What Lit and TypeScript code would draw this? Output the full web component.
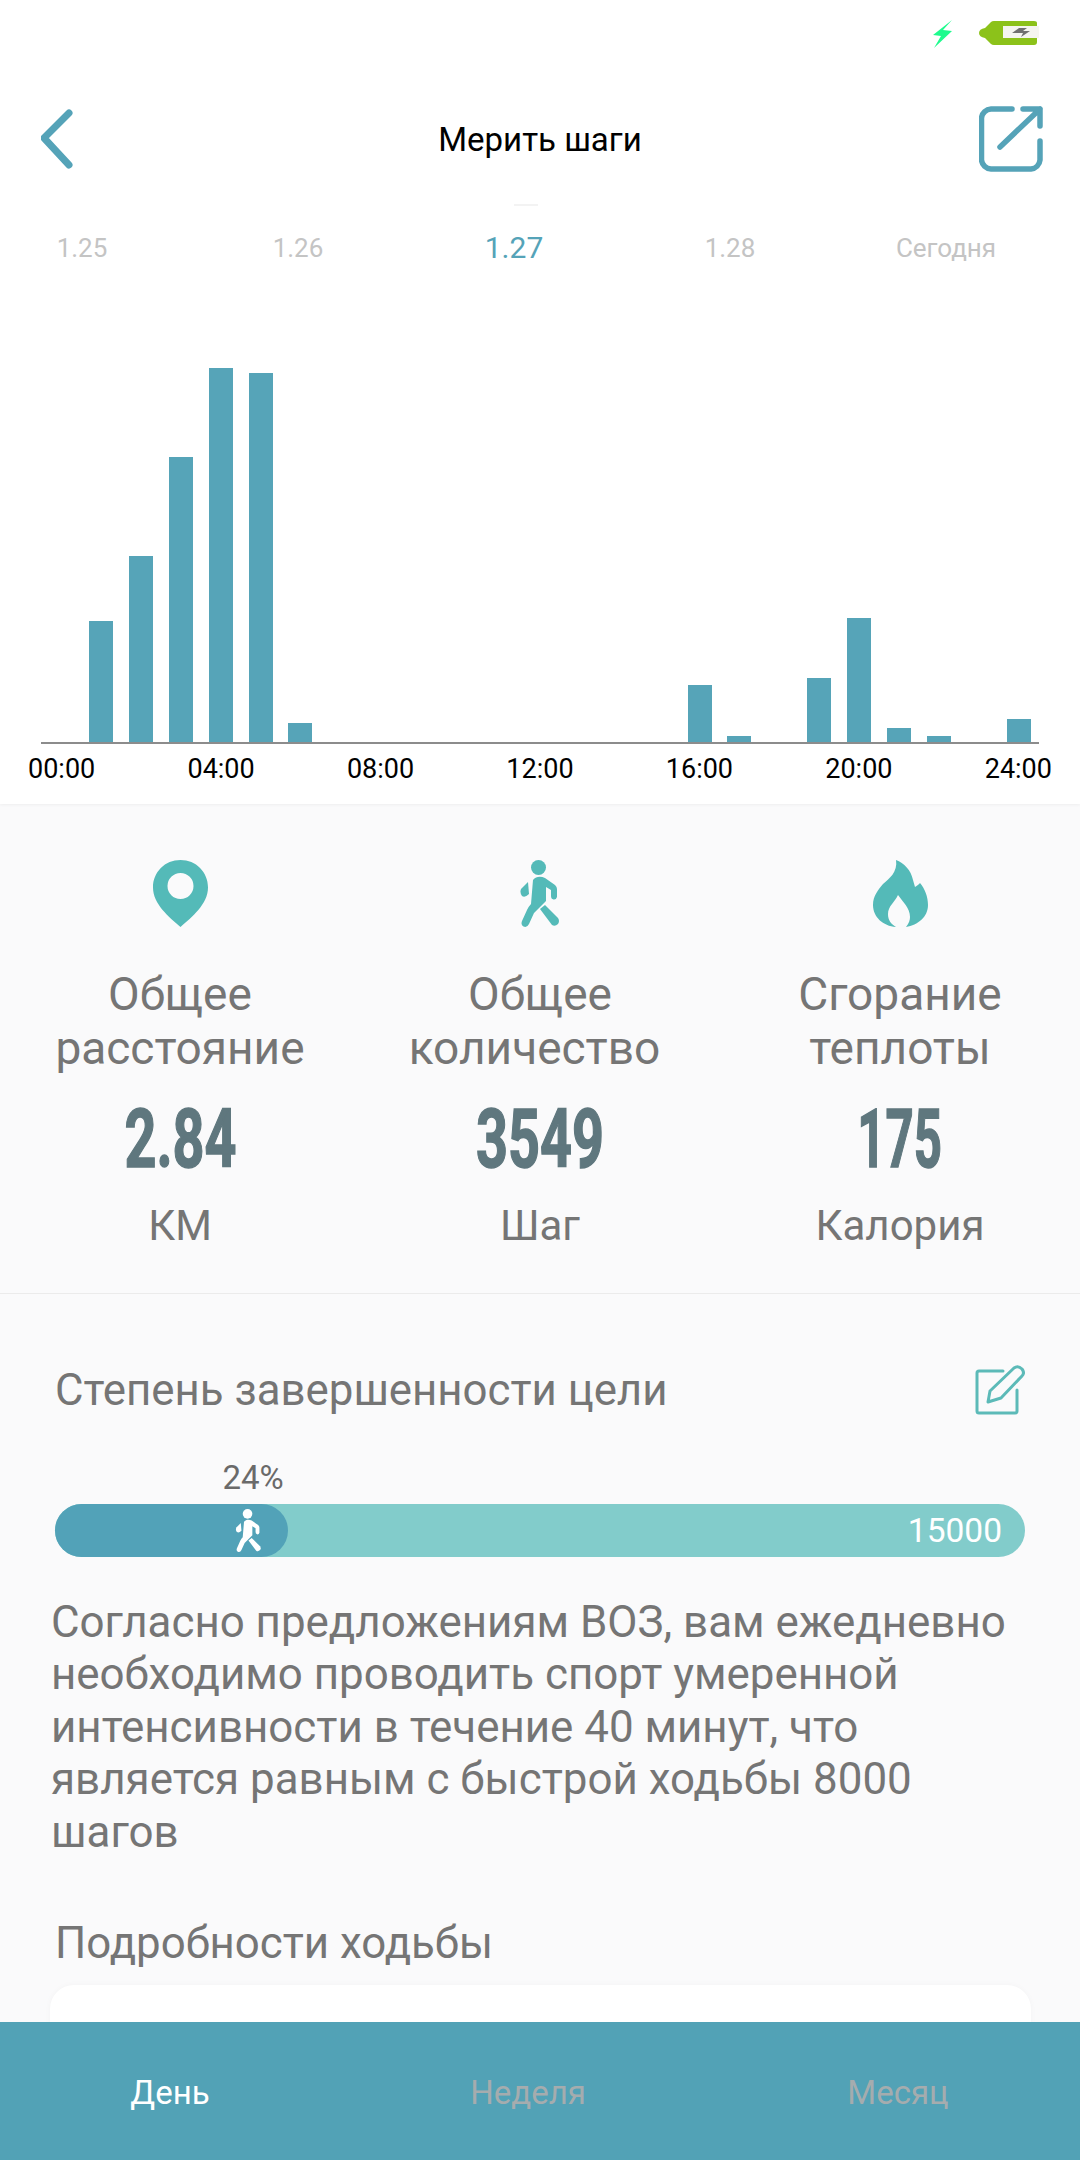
import { LitElement, html, css, svg } from 'lit';
import { customElement } from 'lit/decorators.js';

const BARS: Record<number, number> = {
  1: 121, 2: 186, 3: 285, 4: 374, 5: 369, 6: 19,
  16: 57, 17: 6, 19: 64, 20: 124, 21: 14, 22: 6, 24: 23,
};

const WALKER = svg`
  <circle cx="18.500" cy="7.500" r="7.500"/>
  <path d="M13 20C16 16 21 16 25 18L35 25Q37 27 37 29V37Q36 40 33.500 39.500 31 39 31 36V30L26 27V41L14 53 9 64Q7 68 3.500 66.500 .5 65 2 61L7 50Q9 46 11 44Z"/>
  <path d="M20 49L25 45 38 58Q40 61 38 64 35 67 32 65Z"/>
  <path d="M8 22L9 34Q5 38 2 36-.5 33 1 29Z"/>
`;

@customElement('app-root')
export class AppRoot extends LitElement {
  static override styles = css`
    :host {
      display: block;
      width: 1080px;
      height: 2160px;
      overflow: hidden;
      position: relative;
      background: #fafafb;
      font-family: Roboto, sans-serif;
    }

    .top {
      background: #fff;
      height: 804px;
      overflow: hidden;
      box-shadow: 0 1px 3px rgba(0, 0, 0, 0.05);
      position: relative;
    }

    .status {
      height: 47px;
      display: flex;
      justify-content: flex-end;
      align-items: flex-end;
      gap: 26px;
      padding-right: 41px;
    }

    .header {
      height: 100px;
      margin-top: 42px;
      display: flex;
      align-items: center;
      justify-content: space-between;
      padding: 0 37px 0 41px;
      position: relative;
    }

    .title {
      position: absolute;
      left: 0;
      right: 0;
      text-align: center;
      font-size: 33px;
      color: #000;
    }

    .tick {
      position: absolute;
      left: 514px;
      top: 204px;
      width: 24px;
      height: 2px;
      background: #f3f3f3;
    }

    .dates {
      display: grid;
      grid-template-columns: repeat(5, 216px);
      margin: 44px 0 0 -26px;
      font-size: 26px;
      line-height: 30px;
      color: #c4c4c4;
      text-align: center;
    }

    .dates .on {
      color: #55a3b8;
      font-size: 30px;
    }

    .chart {
      height: 376px;
      margin: 105px 0 0 41px;
      width: 998px;
      border-bottom: 2px solid #8c8c8c;
      display: flex;
      align-items: flex-end;
      padding-left: 8px;
      box-sizing: border-box;
    }

    .slot {
      flex: 0 0 39.91px;
      display: flex;
      align-items: flex-end;
    }

    .bar {
      width: 24px;
      background: #56a4b8;
    }

    .axis {
      display: flex;
      justify-content: space-between;
      padding: 9px 28px 0 28px;
      font-size: 27px;
      line-height: 32px;
      color: #000;
    }

    .stats {
      display: grid;
      grid-template-columns: repeat(3, 360px);
      height: 490px;
      border-bottom: 1px solid #ebebeb;
      box-sizing: border-box;
      text-align: center;
      color: #757575;
    }

    .stat {
      display: flex;
      flex-direction: column;
      align-items: center;
      padding-top: 56px;
    }

    .stat svg {
      fill: #54bab8;
      display: block;
    }

    .label {
      margin-top: 40px;
      font-size: 46px;
      line-height: 54px;
      white-space: nowrap;
    }

    .shift {
      display: inline-block;
      padding-right: 11px;
    }

    .value {
      margin-top: 19px;
      font-size: 82px;
      line-height: 90px;
      font-weight: 700;
      color: #5f777e;
      transform: scaleX(0.68);
      -webkit-text-stroke: 1.5px #5f777e;
    }

    .value.tight {
      transform: scaleX(0.6);
    }

    .unit {
      margin-top: 17px;
      font-size: 42px;
      line-height: 50px;
    }

    .goal {
      padding: 71px 55px 0;
      color: #757575;
    }

    .goal-head {
      display: flex;
      justify-content: space-between;
      align-items: center;
      font-size: 43.8px;
      line-height: 50px;
    }

    .pct {
      margin: 45px 0 0 181px;
      width: 34px;
      display: flex;
      justify-content: center;
      font-size: 33px;
      line-height: 36px;
      color: #6a6a6a;
    }

    .track {
      position: relative;
      margin-top: 8px;
      height: 53px;
      border-radius: 27px;
      background: #82cccb;
      display: flex;
      align-items: center;
      justify-content: flex-end;
      padding-right: 23px;
      color: #fff;
      font-size: 33.500px;
    }

    .fill {
      position: absolute;
      left: 0;
      top: 0;
      bottom: 0;
      width: 233px;
      border-radius: 27px;
      background: #52a2b8;
      display: flex;
      justify-content: flex-end;
      align-items: center;
      padding-right: 26px;
      box-sizing: border-box;
    }

    .note {
      margin: 39px 10px 0 -4px;
      font-size: 43.9px;
      line-height: 52.4px;
    }

    .more {
      margin-top: 60px;
      font-size: 43.8px;
      line-height: 50px;
    }

    .card {
      position: absolute;
      left: 50px;
      top: 1985px;
      width: 981px;
      height: 100px;
      background: #fff;
      border-radius: 24px;
      box-shadow: 0 0 6px rgba(0, 0, 0, 0.03);
    }

    .nav {
      position: absolute;
      left: 0;
      right: 0;
      bottom: 0;
      height: 138px;
      padding-top: 2px;
      box-sizing: border-box;
      background: #52a2b6;
      display: grid;
      grid-template-columns: 340px 376px 364px;
      align-items: center;
      text-align: center;
      font-size: 33px;
      color: #a5acae;
    }

    .nav .on {
      color: #fff;
    }
  `;

  override render() {
    const hours = Array.from({ length: 25 }, (_, i) => i);
    return html`
      <div class="top">
        <div class="status">
          <svg width="22" height="28" viewBox="0 0 22 28" style="margin-bottom:-1px">
            <path d="M21 0 L2 15 L10 16 L3 28 L21 11 L12 10Z" fill="#1ffb8e"/>
          </svg>
          <svg width="60" height="27" viewBox="0 0 60 27">
            <path d="M6 8 L12 2 Q13 1 15 1 H55 Q58 1 58 3 V6 H24 V18 H58 V22 Q58 25 55 25 H15 Q13 25 12 24 L6 18 Q0 17 0 13 Q0 9 6 8Z" fill="#8cc21a"/>
            <rect x="24" y="6" width="36" height="12" fill="#f5f5f0"/>
            <path d="M40 8 H48 L44 11 H51 L42 17 L44 13 H33 Z" fill="#707070"/>
          </svg>
        </div>
        <div class="header">
          <svg width="32" height="60" viewBox="0 0 32 60" fill="none" stroke="#55a3b8" stroke-width="7" stroke-linecap="round" stroke-linejoin="round">
            <path d="M28 4 L3 29 L28 56"/>
          </svg>
          <div class="title">Мерить шаги</div>
          <svg width="64" height="66" viewBox="0 0 64 66" fill="none" stroke="#55a3b8" stroke-width="5.500" stroke-linecap="round" stroke-linejoin="round">
            <path d="M33 3 H12 A10 10 0 0 0 2.500 12 V54 A10 10 0 0 0 12 63 H52 A10 10 0 0 0 61 54 V35"/>
            <path d="M44 3 H61 V20 M61 3 L21 41"/>
          </svg>
        </div>
        <div class="tick"></div>
        <div class="dates">
          <div>1.25</div>
          <div>1.26</div>
          <div class="on">1.27</div>
          <div>1.28</div>
          <div>Сегодня</div>
        </div>
        <div class="chart">
          ${hours.map(
            (h) => html`<div class="slot">
              ${BARS[h] ? html`<div class="bar" style="height:${BARS[h]}px"></div>` : ''}
            </div>`
          )}
        </div>
        <div class="axis">
          ${['00:00', '04:00', '08:00', '12:00', '16:00', '20:00', '24:00'].map((t) => html`<span>${t}</span>`)}
        </div>
      </div>

      <div class="stats">
        <div class="stat">
          <svg width="55" height="67" viewBox="0 0 55 67">
            <path fill-rule="evenodd" d="M27.500 0C12 0 0 12 0 27.500 0 44 16 57 27.500 67 39 57 55 44 55 27.500 55 12 43 0 27.500 0ZM27.500 13A13 13 0 1 1 27.500 39 13 13 0 1 1 27.500 13Z"/>
          </svg>
          <div class="label">Общее<br />расстояние</div>
          <div class="value">2.84</div>
          <div class="unit">КМ</div>
        </div>
        <div class="stat">
          <svg width="40" height="67" viewBox="0 0 40 67">${WALKER}</svg>
          <div class="label">Общее<br /><span class="shift">количество</span></div>
          <div class="value">3549</div>
          <div class="unit">Шаг</div>
        </div>
        <div class="stat">
          <svg width="55" height="67" viewBox="0 0 55 67">
            <path d="M23 0C31 3 38 10 40 20L42 27C44 26 46 24 47 23 52 29 55 37 55 45 55 57 45 65 33 67 36 63 37 60 37 57 37 48 30 42 25 35 22 42 15 46 15 54 15 60 18 64 23 67 10 66 0 57 0 45 0 36 5 30 10 24 16 19 25 12 23 0Z"/>
          </svg>
          <div class="label">Сгорание<br />теплоты</div>
          <div class="value tight">175</div>
          <div class="unit">Калория</div>
        </div>
      </div>

      <div class="goal">
        <div class="goal-head">
          <span>Степень завершенности цели</span>
          <svg width="50" height="50" viewBox="0 0 50 50" fill="none" stroke="#5cbab8" stroke-width="3" stroke-linecap="round" stroke-linejoin="round">
            <path d="M28 6 H4 Q2 6 2 8 V46 Q2 48 4 48 H40 Q42 48 42 46 V25"/>
            <path d="M15 26 L39 3 Q43 0 47 4 Q50 8 47 11 L26 33 L13 37Z"/>
          </svg>
        </div>
        <div class="pct"><span>24%</span></div>
        <div class="track">
          <div class="fill">
            <svg width="27" height="43" viewBox="0 0 40 67" fill="#fff">${WALKER}</svg>
          </div>
          15000
        </div>
        <div class="note">Согласно предложениям ВОЗ, вам ежедневно необходимо проводить спорт умеренной интенсивности в течение 40 минут, что является равным с быстрой ходьбы 8000 шагов</div>
        <div class="more">Подробности ходьбы</div>
      </div>

      <div class="card"></div>
      <div class="nav">
        <div class="on">День</div>
        <div>Неделя</div>
        <div>Месяц</div>
      </div>
    `;
  }
}

declare global {
  interface HTMLElementTagNameMap {
    'app-root': AppRoot;
  }
}
